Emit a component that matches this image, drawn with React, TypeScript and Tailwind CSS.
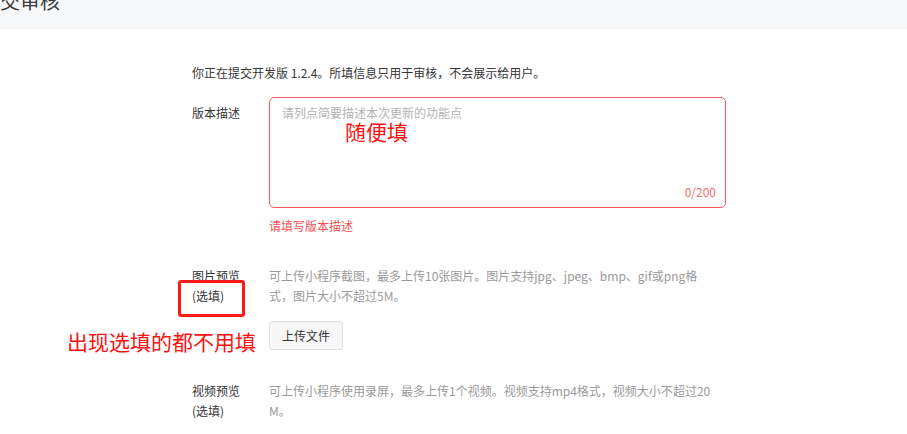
import React from 'react';

const FONT = { fontFamily: '"Noto Sans CJK SC", "Liberation Sans", sans-serif' };

const Row: React.FC<{ label: React.ReactNode; children: React.ReactNode; className?: string }> = ({
  label,
  children,
  className = '',
}) => (
  <div className={`flex ${className}`}>
    <div className="w-[77px] shrink-0 text-[12px] leading-[20px] text-[#353535]">{label}</div>
    <div className="w-[457px]">{children}</div>
  </div>
);

export default function App() {
  return (
    <div className="relative w-[907px] h-[434px] overflow-hidden bg-white" style={FONT}>
      {/* 顶部标题 */}
      <div className="h-[29px] bg-[#f7f8fa] overflow-hidden">
        <div className="-mt-[9px] ml-[-20px] text-[20px] leading-[20px] text-[#3a3a3a]">提交审核</div>
      </div>

      <div className="pl-[192px]">
        <p className="mt-[34px] text-[12px] leading-[20px] text-[#353535]">
          你正在提交开发版 1.2.4。所填信息只用于审核，不会展示给用户。
        </p>

        {/* 版本描述 */}
        <Row label={<div className="pt-[6px]">版本描述</div>} className="mt-[14px]">
          <div className="relative h-[111px] rounded-[5px] border border-[#f55a5a] px-[12px] pt-[7px]">
            <div className="text-[12px] leading-[16px] text-[#b2b2b2]">请列点简要描述本次更新的功能点</div>
            <div className="absolute right-[9px] bottom-[5px] text-[12px] leading-[20px] text-[#f56c6c]">0/200</div>
          </div>
          <div className="mt-[8px] text-[12px] leading-[20px] text-[#fa5151]">请填写版本描述</div>
        </Row>

        {/* 图片预览 */}
        <Row
          label={
            <>
              <div>图片预览</div>
              <div>(选填)</div>
            </>
          }
          className="mt-[30px]"
        >
          <p className="w-[445px] text-[12px] leading-[20px] text-[#9a9a9a]">
            可上传小程序截图，最多上传10张图片。图片支持jpg、jpeg、bmp、gif或png格式，图片大小不超过5M。
          </p>
          <button className="mt-[15px] h-[29px] w-[74px] rounded-[3px] border border-[#e2e2e2] bg-[#f7f7f7] text-[12px] text-[#353535]">
            上传文件
          </button>
        </Row>

        {/* 视频预览 */}
        <Row
          label={
            <>
              <div>视频预览</div>
              <div>(选填)</div>
            </>
          }
          className="mt-[31px]"
        >
          <p className="w-[445px] text-[12px] leading-[20px] text-[#9a9a9a]">
            可上传小程序使用录屏，最多上传1个视频。视频支持mp4格式，视频大小不超过20<wbr />M。
          </p>
        </Row>
      </div>

      {/* 标注 */}
      <div className="absolute left-[345px] top-[120px] text-[21px] leading-[22px] text-[#ff1111]">随便填</div>
      <div className="absolute left-[178px] top-[280px] h-[37px] w-[67px] rounded-[3px] border-[3px] border-[#ff1a1a]" />
      <div className="absolute left-[67px] top-[330px] text-[21px] leading-[22px] text-[#ff1111]">出现选填的都不用填</div>
    </div>
  );
}
